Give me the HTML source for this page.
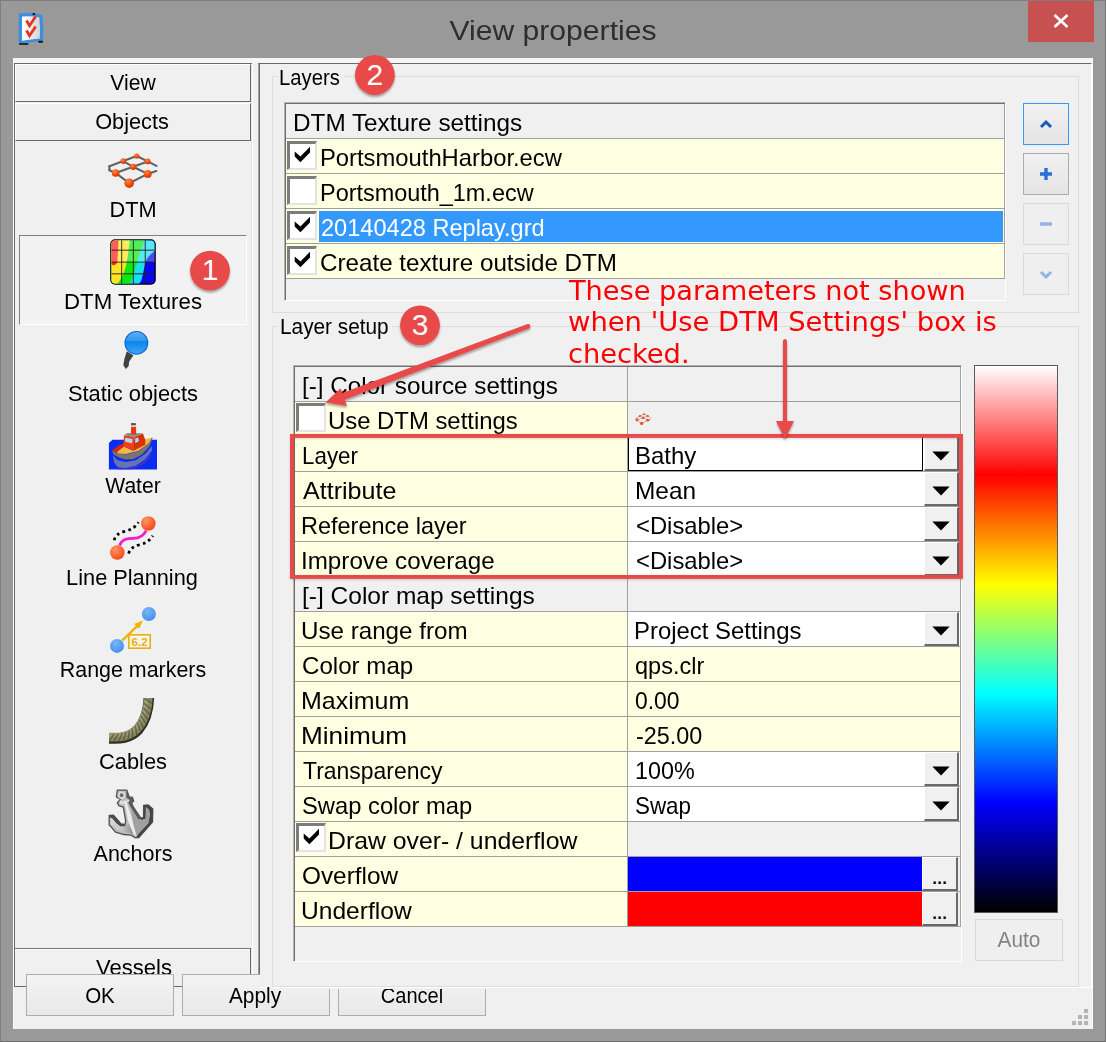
<!DOCTYPE html>
<html><head><meta charset="utf-8"><title>View properties</title>
<style>
html,body{margin:0;padding:0}
body{width:1106px;height:1042px;overflow:hidden;background:#999;position:relative;font-family:"Liberation Sans",sans-serif}
div,svg{position:absolute;box-sizing:border-box}
.t{white-space:nowrap}
.btn{background:linear-gradient(#f2f2f2,#ebebeb 50%,#dddddd 50%,#cfcfcf);border:1px solid #707070}
.pbtn{background:linear-gradient(#f3f3f3,#e9e9e9);border:1px solid #acacac}
.raised{background:#f0f0f0;border-top:1px solid #fff;border-left:1px solid #fff;border-right:1px solid #696969;border-bottom:1px solid #696969}
.cb{width:30px;height:29px;background:#fff;border-top:3px solid #7c7c7c;border-left:3px solid #7c7c7c;border-right:2px solid #e3e3e3;border-bottom:2px solid #e3e3e3}
.hl{height:1px;background:#a0a0a0}
.dd{width:35px;height:34px;background:#f0f0f0;border-top:1px solid #fff;border-left:1px solid #fff;border-right:2px solid #696969;border-bottom:2px solid #696969}
</style></head><body>

<div style="left:0;top:0;width:1106px;height:1042px;border:1px solid #7d7d7d;border-bottom-color:#6e6e6e;border-right-color:#747474"></div>
<div style="left:1028px;top:1px;width:66px;height:41px;background:#c75050"></div>
<svg style="left:1053px;top:14px" width="16" height="14" viewBox="0 0 16 14"><path d="M1.5 1 L14.5 13 M14.5 1 L1.5 13" stroke="#fff" stroke-width="2.6" fill="none"/></svg>
<svg style="left:17px;top:11px" width="30" height="36" viewBox="0 0 30 36">
<defs><linearGradient id="gTi" x1="0" y1="0" x2="1" y2="0"><stop offset="0" stop-color="#ffffff"/><stop offset="1" stop-color="#d4d4d4"/></linearGradient></defs>
<path d="M1.8 2.4 Q14 1.4 25 3.8 Q27.2 17 26 30 Q14 31 1.8 33 Z" fill="#3b8fe0"/>
<path d="M5 5.6 Q14 4.6 22.3 6.2 Q23.6 17 22.8 27.6 Q14 28.4 5 29.8 Z" fill="url(#gTi)"/>
<path d="M9.5 9.5 l3 5.2 l6.2 -9.2" stroke="#e23424" stroke-width="2.8" fill="none"/>
<path d="M9.5 19.5 l3 5.2 l6.2 -9.2" stroke="#e23424" stroke-width="2.8" fill="none"/>
<rect x="2.2" y="32.2" width="9.2" height="1.6" fill="#111"/><rect x="21.4" y="29.8" width="4.4" height="1.9" fill="#111"/><rect x="15.6" y="2" width="2.4" height="1.9" fill="#111"/>
</svg>
<div class="t" id="title" style="left:253.25px;width:600px;text-align:center;transform-origin:50% 0;top:15.76px;font:28.4px/28.4px 'Liberation Sans',sans-serif;color:#2e2e2e;transform:scaleX(1.0608);">View properties</div>
<div style="left:13px;top:58px;width:1080px;height:971px;background:#f0f0f0"></div>
<div style="left:13px;top:58px;width:1080px;height:5px;background:#f6f6f6"></div>
<div style="left:13px;top:58px;width:1px;height:971px;background:#fbfbfb"></div>
<div style="left:1092px;top:58px;width:1px;height:971px;background:#fdfdfd"></div>
<div style="left:14px;top:63px;width:238px;height:924px;border-left:1px solid #696969;border-top:1px solid #696969;border-bottom:1px solid #696969"></div>
<div style="left:251px;top:64px;width:1px;height:910px;background:#e3e3e3"></div>
<div style="left:252px;top:63px;width:1px;height:911px;background:#fff"></div>
<div class="raised" style="left:15px;top:64px;width:236px;height:38px"></div>
<div class="raised" style="left:15px;top:103px;width:236px;height:38px"></div>
<div style="left:15px;top:948px;width:236px;height:38px;background:#f0f0f0;border-top:1px solid #747474;border-right:1px solid #696969"></div>
<div style="left:15px;top:949px;width:235px;height:1px;background:#fff"></div>
<div class="t" id="l_view" style="left:-167.0px;width:600px;text-align:center;transform-origin:50% 0;top:72.94px;font:21.33px/21.33px 'Liberation Sans',sans-serif;color:#000;transform:scaleX(0.9916);">View</div>
<div class="t" id="l_objects" style="left:-167.9px;width:600px;text-align:center;transform-origin:50% 0;top:111.94px;font:21.33px/21.33px 'Liberation Sans',sans-serif;color:#000;transform:scaleX(1.0197);">Objects</div>
<div class="t" id="l_vessels" style="left:-166.2px;width:600px;text-align:center;transform-origin:50% 0;top:958.44px;font:21.33px/21.33px 'Liberation Sans',sans-serif;color:#000;transform:scaleX(1.0328);">Vessels</div>
<div style="left:19px;top:235px;width:228px;height:90px;border-top:1px solid #808080;border-left:1px solid #808080;border-right:1px solid #fff;border-bottom:1px solid #fff;background:#f2f2f2"></div>
<div class="t" id="l_dtm" style="left:-167.4px;width:600px;text-align:center;transform-origin:50% 0;top:199.94px;font:21.33px/21.33px 'Liberation Sans',sans-serif;color:#000;transform:scaleX(1.0203);">DTM</div>
<div class="t" id="l_dtmtex" style="left:-167.2px;width:600px;text-align:center;transform-origin:50% 0;top:291.94px;font:21.33px/21.33px 'Liberation Sans',sans-serif;color:#000;transform:scaleX(1.0429);">DTM Textures</div>
<div class="t" id="l_static" style="left:-167.0px;width:600px;text-align:center;transform-origin:50% 0;top:383.94px;font:21.33px/21.33px 'Liberation Sans',sans-serif;color:#000;transform:scaleX(1.0256);">Static objects</div>
<div class="t" id="l_water" style="left:-167.1px;width:600px;text-align:center;transform-origin:50% 0;top:475.94px;font:21.33px/21.33px 'Liberation Sans',sans-serif;color:#000;transform:scaleX(0.9893);">Water</div>
<div class="t" id="l_line" style="left:-167.8px;width:600px;text-align:center;transform-origin:50% 0;top:567.94px;font:21.33px/21.33px 'Liberation Sans',sans-serif;color:#000;transform:scaleX(1.0191);">Line Planning</div>
<div class="t" id="l_range" style="left:-167.3px;width:600px;text-align:center;transform-origin:50% 0;top:659.94px;font:21.33px/21.33px 'Liberation Sans',sans-serif;color:#000;transform:scaleX(1.0042);">Range markers</div>
<div class="t" id="l_cables" style="left:-167.4px;width:600px;text-align:center;transform-origin:50% 0;top:751.94px;font:21.33px/21.33px 'Liberation Sans',sans-serif;color:#000;transform:scaleX(1.0248);">Cables</div>
<div class="t" id="l_anchors" style="left:-167.3px;width:600px;text-align:center;transform-origin:50% 0;top:843.94px;font:21.33px/21.33px 'Liberation Sans',sans-serif;color:#000;transform:scaleX(1.0077);">Anchors</div>
<svg style="left:0;top:0" width="1106" height="1042" viewBox="0 0 1106 1042">
<defs>
<radialGradient id="gO" cx="0.38" cy="0.3" r="0.75"><stop offset="0" stop-color="#ff8a3a"/><stop offset="0.6" stop-color="#f24a10"/><stop offset="1" stop-color="#c83000"/></radialGradient>
<radialGradient id="gO2" cx="0.35" cy="0.3" r="0.8"><stop offset="0" stop-color="#ff9560"/><stop offset="0.7" stop-color="#fa5a28"/><stop offset="1" stop-color="#e84418"/></radialGradient>
<radialGradient id="gB" cx="0.4" cy="0.3" r="0.8"><stop offset="0" stop-color="#78b6f6"/><stop offset="1" stop-color="#3c8cec"/></radialGradient>
<linearGradient id="gPin" x1="0" y1="0" x2="0" y2="1"><stop offset="0" stop-color="#58aef4"/><stop offset="0.4" stop-color="#2f98f0"/><stop offset="0.42" stop-color="#0a84ea"/><stop offset="1" stop-color="#3ca4f4"/></linearGradient>
<linearGradient id="gAn" x1="0" y1="0" x2="1" y2="0"><stop offset="0" stop-color="#d8d8d8"/><stop offset="0.5" stop-color="#c4c4c4"/><stop offset="1" stop-color="#8c8c8c"/></linearGradient>
<clipPath id="cTex"><rect x="111.5" y="240.5" width="43" height="43" rx="3.5"/></clipPath>
</defs>
<polyline points="109.4,166.3 123.3,161.1 136.7,156.0" fill="none" stroke="#626262" stroke-width="2.1" stroke-linecap="round"/>
<polyline points="136.7,156.0 147.7,161.4 156.4,165.9" fill="none" stroke="#626262" stroke-width="2.1" stroke-linecap="round"/>
<polyline points="123.3,161.1 133.1,166.8 147.7,173.9" fill="none" stroke="#626262" stroke-width="2.1" stroke-linecap="round"/>
<polyline points="147.7,161.4 133.1,166.8 115.6,173.0" fill="none" stroke="#626262" stroke-width="2.1" stroke-linecap="round"/>
<polyline points="109.4,170.2 115.6,173.0 129.2,183.2" fill="none" stroke="#626262" stroke-width="2.1" stroke-linecap="round"/>
<polyline points="129.2,183.2 147.7,173.9 156.4,171.0" fill="none" stroke="#626262" stroke-width="2.1" stroke-linecap="round"/>
<polyline points="109.4,166.3 109.4,170.2" fill="none" stroke="#626262" stroke-width="2.1" stroke-linecap="round"/>
<circle cx="136.7" cy="156.0" r="2.6" fill="url(#gO)"/>
<circle cx="123.3" cy="161.1" r="2.8" fill="url(#gO)"/>
<circle cx="147.7" cy="161.4" r="2.8" fill="url(#gO)"/>
<circle cx="133.1" cy="166.8" r="3.1" fill="url(#gO)"/>
<circle cx="115.6" cy="173.0" r="3.8" fill="url(#gO)"/>
<circle cx="147.7" cy="173.9" r="3.9" fill="url(#gO)"/>
<circle cx="129.2" cy="183.2" r="4.8" fill="url(#gO)"/>
<rect x="110.2" y="239.2" width="45.6" height="45.6" rx="5" fill="#000"/>
<g clip-path="url(#cTex)">
<rect x="111" y="240" width="44" height="44" fill="#0808f0"/>
<path d="M111 240 H155 V251 Q148 255 145.5 262 Q143.5 272 141.5 280 L138.5 285 H111 Z" fill="#18e0f0"/>
<path d="M111 240 H144.7 Q139 255 137 262 Q134 274 129.8 285 H111 Z" fill="#10e810"/>
<path d="M111 240 H129.8 Q128 255 126.8 262 Q125 270 123.3 274 Q120 281 116.5 285 H111 Z" fill="#ffe420"/>
<path d="M111 240 H118.5 Q118 252 117.3 262 Q116 266 113 265 L111 264.5 Z" fill="#ff2018"/>
<rect x="111" y="240" width="44" height="22" fill="#fff" opacity="0.28"/>
<rect x="121.0" y="240" width="1.2" height="44" fill="#202020" opacity="0.75"/>
<rect x="132.8" y="240" width="1.2" height="44" fill="#202020" opacity="0.75"/>
<rect x="144.70000000000002" y="240" width="1.2" height="44" fill="#202020" opacity="0.75"/>
<rect x="111" y="249.6" width="44" height="1.2" fill="#202020" opacity="0.75"/>
<rect x="111" y="261.5" width="44" height="1.2" fill="#202020" opacity="0.75"/>
<rect x="111" y="273.2" width="44" height="1.2" fill="#202020" opacity="0.75"/>
</g>
<polygon points="126.8,351.3 133.4,355.4 129.2,361.4 128.6,366.2 125.7,368.9 123.3,365.0 124.5,358.4" fill="#424242" />
<circle cx="136.4" cy="342.9" r="11.9" fill="#0a60d4"/><circle cx="136.4" cy="342.9" r="10.8" fill="url(#gPin)"/>
<polygon points="108.9,443.0 112.5,439.8 157.0,439.8 157.0,469.6 108.9,469.6" fill="#0a2cf2" />
<polygon points="112.8,455.6 117.9,460.3 125.7,462.1 135.8,460.3 145.3,453.8 151.9,446.0 151.9,450.8 145.3,459.2 135.8,465.7 125.7,468.1 117.9,467.2 114.3,462.7" fill="#6474b4" />
<polygon points="117.9,467.5 125.7,468.4 135.8,466.0 145.3,459.5 151.3,451.4 150.1,458.0 141.8,465.7 131.0,469.6 117.9,469.6" fill="#5030c0" opacity="0.7"/>
<polygon points="112.2,450.8 113.4,454.4 119.7,457.7 125.7,459.5 133.4,458.9 141.8,454.7 149.5,446.3 152.8,437.7 151.0,438.0 148.9,443.6 138.2,451.4 125.7,454.4 117.3,453.5 113.1,450.2" fill="#7c766a" />
<polygon points="112.2,450.5 117.9,446.0 123.3,443.3 123.9,446.6 116.7,452.3 114.0,451.7" fill="#d82808" />
<polygon points="116.7,452.3 123.9,446.6 133.4,450.8 145.3,438.9 151.3,438.0 148.9,443.3 138.2,451.1 125.7,454.1 117.9,453.5" fill="#f8b83c" />
<polygon points="123.9,435.3 134.6,436.8 134.0,450.5 123.3,446.6" fill="#f04014" />
<polygon points="134.6,436.8 143.0,433.5 145.3,440.1 145.3,444.8 134.0,450.5" fill="#d83208" />
<polygon points="123.9,435.3 127.4,432.9 143.0,433.2 135.2,437.0" fill="#8c8c8c" />
<polygon points="125.1,437.7 132.5,438.9 132.2,443.3 125.1,441.8" fill="#a8dcf8" />
<polygon points="135.2,438.4 138.2,437.4 138.8,441.3 135.2,443.2" fill="#a8dcf8" />
<polygon points="131.0,426.3 136.1,426.3 136.1,434.4 131.0,434.1" fill="#e83a10" />
<polygon points="131.0,423.1 135.8,423.1 135.8,425.6 131.0,425.6" fill="#505050" />
<polygon points="131.0,425.6 136.0,425.6 136.0,426.7 131.0,426.7" fill="#f4f4f4" />
<path d="M119.7 545.6 C121.5 539.0 127.4 538.4 133.4 538.4 S144.2 534.8 146.2 530.7" fill="none" stroke="#f21cd2" stroke-width="2.8"/>
<path d="M114.2 540.2 Q115.8 533.7 123.9 531.6 Q134.0 529.5 138.5 522.3" fill="none" stroke="#000" stroke-width="2.7" stroke-dasharray="2.7 3.3"/>
<path d="M128.6 553.6 Q131.0 546.8 138.8 545.0 Q148.3 543.2 152.8 535.7" fill="none" stroke="#000" stroke-width="2.7" stroke-dasharray="2.7 3.3"/>
<circle cx="148.3" cy="523.5" r="7.3" fill="url(#gO2)"/><circle cx="117.3" cy="552.5" r="7.3" fill="url(#gO2)"/>
<path d="M122.1 640.6 L138.2 625.1" stroke="#f0b400" stroke-width="2.3"/>
<polygon points="142.9,620.4 134.1,623.9 139.2,628.8" fill="#f0b400"/>
<circle cx="148.9" cy="614" r="7" fill="url(#gB)"/><circle cx="117" cy="645.9" r="7" fill="url(#gB)"/>
<rect x="128.8" y="634.8" width="21.4" height="13.4" fill="#f6f4ee" stroke="#e8b010" stroke-width="1.6"/>
<text x="139.6" y="646" font-family="Liberation Sans,sans-serif" font-weight="bold" font-size="11.5" fill="#e8b010" text-anchor="middle">6.2</text>
<clipPath id="cCab"><rect x="109" y="698" width="50" height="50"/></clipPath><g clip-path="url(#cCab)">
<path d="M148.9 697 C148.5 712 144.6 722.2 138.3 729.6 C130 738.4 120 739.2 108 738.3" fill="none" stroke="#2e2e20" stroke-width="10.6"/>
<path d="M148.3 697 C147.8 711.5 143.8 721.5 137.5 728.6 C129.6 737 119.8 737.8 108 737" fill="none" stroke="#87875f" stroke-width="8.8"/>
<path d="M146.6 697 C146 711 142.4 720.2 136.4 727 C129 734.8 119.6 735.6 108 734.8" fill="none" stroke="#9c9c74" stroke-width="3.6"/>
<path d="M152.5 703.8 L144.4 698.1" stroke="#4a4a34" stroke-width="1.3" opacity="0.7"/>
<path d="M151.6 709.7 L144.1 703.3" stroke="#4a4a34" stroke-width="1.3" opacity="0.7"/>
<path d="M150.3 715.1 L143.4 708.0" stroke="#4a4a34" stroke-width="1.3" opacity="0.7"/>
<path d="M148.5 720.0 L142.4 712.3" stroke="#4a4a34" stroke-width="1.3" opacity="0.7"/>
<path d="M146.4 724.5 L141.1 716.2" stroke="#4a4a34" stroke-width="1.3" opacity="0.7"/>
<path d="M143.8 728.6 L139.4 719.7" stroke="#4a4a34" stroke-width="1.3" opacity="0.7"/>
<path d="M140.9 732.3 L137.5 723.0" stroke="#4a4a34" stroke-width="1.3" opacity="0.7"/>
<path d="M137.0 735.8 L135.3 726.1" stroke="#4a4a34" stroke-width="1.3" opacity="0.7"/>
<path d="M132.5 738.6 L132.4 728.8" stroke="#4a4a34" stroke-width="1.3" opacity="0.7"/>
<path d="M127.8 740.6 L129.4 730.8" stroke="#4a4a34" stroke-width="1.3" opacity="0.7"/>
<path d="M123.0 741.7 L126.1 732.3" stroke="#4a4a34" stroke-width="1.3" opacity="0.7"/>
<path d="M118.2 742.1 L122.4 733.2" stroke="#4a4a34" stroke-width="1.3" opacity="0.7"/>
<path d="M113.4 742.2 L118.4 733.7" stroke="#4a4a34" stroke-width="1.3" opacity="0.7"/>
<path d="M108.5 741.9 L114.1 733.8" stroke="#4a4a34" stroke-width="1.3" opacity="0.7"/>
</g>
<polygon points="117.3,790.1 126.8,790.1 129.2,796.9 132.5,797.5 133.7,801.1 131.6,802.9 133.4,807.1 140.6,817.8 143.6,817.8 143.6,805.3 148.3,805.0 152.8,809.1 152.5,822.0 138.8,837.5 135.2,837.8 131.0,835.1 123.9,834.5 115.5,832.1 111.9,827.9 109.2,825.0 109.2,815.4 113.4,815.1 117.9,820.2 120.9,823.8 125.1,824.4 125.7,820.8 123.3,807.1 119.1,805.9 117.3,802.9 120.3,799.3 116.4,796.9" fill="#bcbcbc" stroke="#505050" stroke-width="1.3" stroke-linejoin="round"/>
<polygon points="143.6,805.3 148.3,805.0 152.8,809.1 152.5,822.0 138.8,837.5 136.4,837.2 138.2,833.9 148.3,823.2 149.8,815.4 149.2,810.0 145.9,807.1 145.8,818.7 141.2,820.2 139.4,817.8 143.6,817.8" fill="#454545" />
<polygon points="127.1,790.9 129.2,796.9 132.5,797.5 133.7,801.1 131.6,802.9 133.4,807.1 140.6,817.8 138.8,820.2 131.0,807.7 128.0,802.3 129.8,799.9 126.3,797.5 126.3,792.1" fill="#5a5a5a" />
<polygon points="109.2,815.4 113.4,815.1 117.9,820.2 120.9,823.8 125.1,824.4 125.4,826.2 120.3,826.5 116.1,823.2 112.2,818.4 110.4,817.8" fill="#4a4a4a" />
<polygon points="110.4,817.8 112.2,818.5 116.7,823.8 120.6,826.6 126.3,826.6 128.3,823.8 133.7,833.9 128.6,833.0 117.9,830.0 113.1,825.9 110.6,823.8" fill="url(#gAn)" />
<polygon points="131.0,808.3 138.8,820.5 145.6,819.0 145.9,807.7 149.0,810.3 149.6,815.4 148.0,822.9 138.2,833.6 136.4,835.7 133.4,825.0" fill="#a0a0a0" />
<polygon points="123.6,799.9 126.3,801.4 131.0,815.4 136.4,836.0 133.7,833.9 128.0,820.8 125.4,807.1" fill="#ececec" />
<polygon points="119.7,800.5 123.9,801.7 128.6,799.9 129.8,801.1 125.1,803.6 120.3,804.2" fill="#e0e0e0" />
<circle cx="121.6" cy="795.2" r="3.7" fill="#dcdcdc"/><circle cx="121.6" cy="795.2" r="1.9" fill="#6c6c6c"/>
</svg>
<div style="left:258px;top:63px;width:834px;height:925px;border-left:1px solid #a0a0a0;border-top:1px solid #696969;border-right:1px solid #fff;border-bottom:1px solid #fff"></div>
<div style="left:259px;top:63px;width:1px;height:911px;background:#696969"></div>
<div class="pbtn" style="left:26px;top:974px;width:148px;height:42px"></div>
<div class="pbtn" style="left:182px;top:974px;width:148px;height:42px"></div>
<div class="pbtn" style="left:338px;top:974px;width:148px;height:42px"></div>
<div class="t" id="b_cancel" style="left:111.89999999999998px;width:600px;text-align:center;transform-origin:50% 0;top:985.84px;font:21.33px/21.33px 'Liberation Sans',sans-serif;color:#000;transform:scaleX(0.9408);">Cancel</div>
<div style="left:260px;top:64px;width:831px;height:925px;background:#f0f0f0"></div>
<div style="left:260px;top:987px;width:832px;height:1px;background:#fff"></div>
<div class="t" id="b_ok" style="left:-200.2px;width:600px;text-align:center;transform-origin:50% 0;top:985.84px;font:21.33px/21.33px 'Liberation Sans',sans-serif;color:#000;transform:scaleX(0.9625);">OK</div>
<div class="t" id="b_apply" style="left:-44.599999999999994px;width:600px;text-align:center;transform-origin:50% 0;top:985.84px;font:21.33px/21.33px 'Liberation Sans',sans-serif;color:#000;transform:scaleX(0.9786);">Apply</div>
<div style="left:272px;top:76px;width:807px;height:237px;border:1px solid #dcdcdc"></div>
<div style="left:272px;top:326px;width:807px;height:661px;border:1px solid #dcdcdc"></div>
<div style="left:278px;top:66px;width:66px;height:22px;background:#f0f0f0"></div>
<div style="left:278px;top:316px;width:114px;height:22px;background:#f0f0f0"></div>
<div class="t" id="g_layers" style="left:279.40000000000003px;transform-origin:0 0;top:66.88px;font:22px/22px 'Liberation Sans',sans-serif;color:#000;transform:scaleX(0.9205);">Layers</div>
<div class="t" id="g_setup" style="left:280.3px;transform-origin:0 0;top:316.28px;font:22px/22px 'Liberation Sans',sans-serif;color:#000;transform:scaleX(0.9454);">Layer setup</div>
<div style="left:284px;top:102px;width:722px;height:199px;border-left:1px solid #b4b4b4;border-top:1px solid #b4b4b4;border-right:1px solid #fff;border-bottom:1px solid #fff;background:#f0f0f0"></div>
<div style="left:285px;top:103px;width:720px;height:197px;border-left:1px solid #6e6e6e;border-top:1px solid #6e6e6e"></div>
<div class="hl" style="left:286px;top:138px;width:719px"></div>
<div class="t" id="li0" style="left:292.9px;transform-origin:0 0;top:110.68px;font:24px/24px 'Liberation Sans',sans-serif;color:#000;transform:scaleX(1.0125);">DTM Texture settings</div>
<div style="left:286px;top:139px;width:718px;height:34px;background:#ffffe1"></div>
<div class="hl" style="left:286px;top:173px;width:719px"></div>
<div class="cb" style="left:287px;top:141px"></div>
<svg style="left:290px;top:144px" width="25" height="24" viewBox="0 0 25 24"><path d="M4.7 7.6 L10.4 12.6 L20 2.8 L20 8.6 L10.4 18.2 L4.7 12.6 Z" fill="#000"/></svg>
<div class="t" id="li1" style="left:319.7px;transform-origin:0 0;top:145.68px;font:24px/24px 'Liberation Sans',sans-serif;color:#000;transform:scaleX(0.9910);">PortsmouthHarbor.ecw</div>
<div style="left:286px;top:174px;width:718px;height:34px;background:#ffffe1"></div>
<div class="hl" style="left:286px;top:208px;width:719px"></div>
<div class="cb" style="left:287px;top:176px"></div>
<div class="t" id="li2" style="left:319.7px;transform-origin:0 0;top:180.68px;font:24px/24px 'Liberation Sans',sans-serif;color:#000;transform:scaleX(0.9762);">Portsmouth_1m.ecw</div>
<div style="left:286px;top:209px;width:718px;height:34px;background:#ffffe1"></div>
<div class="hl" style="left:286px;top:243px;width:719px"></div>
<div style="left:319px;top:211px;width:684px;height:31px;background:#3399ff"></div>
<div class="cb" style="left:287px;top:211px"></div>
<svg style="left:290px;top:214px" width="25" height="24" viewBox="0 0 25 24"><path d="M4.7 7.6 L10.4 12.6 L20 2.8 L20 8.6 L10.4 18.2 L4.7 12.6 Z" fill="#000"/></svg>
<div class="t" id="li3" style="left:321.40000000000003px;transform-origin:0 0;top:215.68px;font:24px/24px 'Liberation Sans',sans-serif;color:#fff;transform:scaleX(0.9819);">20140428 Replay.grd</div>
<div style="left:286px;top:244px;width:718px;height:34px;background:#ffffe1"></div>
<div class="hl" style="left:286px;top:278px;width:719px"></div>
<div class="cb" style="left:287px;top:246px"></div>
<svg style="left:290px;top:249px" width="25" height="24" viewBox="0 0 25 24"><path d="M4.7 7.6 L10.4 12.6 L20 2.8 L20 8.6 L10.4 18.2 L4.7 12.6 Z" fill="#000"/></svg>
<div class="t" id="li4" style="left:319.59999999999997px;transform-origin:0 0;top:250.68px;font:24px/24px 'Liberation Sans',sans-serif;color:#000;transform:scaleX(1.0075);">Create texture outside DTM</div>
<div style="left:1004px;top:104px;width:1px;height:175px;background:#a0a0a0"></div>
<div style="left:1023px;top:103px;width:46px;height:42px;border:1px solid #3399ff;background:linear-gradient(#f1f1f1,#e4e4e4)"></div>
<svg style="left:1039px;top:119px" width="14" height="10" viewBox="0 0 14 10"><path d="M2 8 L7 3 L12 8" stroke="#1b58bc" stroke-width="3" fill="none"/></svg>
<div style="left:1023px;top:153px;width:46px;height:42px;border:1px solid #acacac;background:linear-gradient(#f1f1f1,#e4e4e4)"></div>
<svg style="left:1039px;top:167px" width="14" height="14" viewBox="0 0 14 14"><path d="M7 1 V13 M1 7 H13" stroke="#2a6fd6" stroke-width="3.4" fill="none"/></svg>
<div style="left:1023px;top:203px;width:46px;height:42px;border:1px solid #d9d9d9;background:#efefef"></div>
<svg style="left:1039px;top:221px" width="14" height="6" viewBox="0 0 14 6"><path d="M1 3 H13" stroke="#8fb4e8" stroke-width="3.4" fill="none"/></svg>
<div style="left:1023px;top:253px;width:46px;height:42px;border:1px solid #d9d9d9;background:#efefef"></div>
<svg style="left:1039px;top:270px" width="14" height="10" viewBox="0 0 14 10"><path d="M2 2 L7 7 L12 2" stroke="#8fb4e8" stroke-width="3" fill="none"/></svg>
<div style="left:293px;top:365px;width:669px;height:597px;border-left:1px solid #b4b4b4;border-top:1px solid #b4b4b4;border-right:1px solid #fff;border-bottom:1px solid #fff;background:#f0f0f0"></div>
<div style="left:294px;top:366px;width:667px;height:595px;border-left:1px solid #6e6e6e;border-top:1px solid #6e6e6e"></div>
<div style="left:295px;top:367px;width:332px;height:34px;background:#f0f0f0"></div>
<div style="left:628px;top:367px;width:332px;height:34px;background:#f0f0f0"></div>
<div class="hl" style="left:295px;top:401px;width:666px"></div>
<div class="t" id="p0" style="left:301.8px;transform-origin:0 0;top:374.38px;font:24px/24px 'Liberation Sans',sans-serif;color:#000;transform:scaleX(1.0092);">[-] Color source settings</div>
<div style="left:295px;top:402px;width:332px;height:34px;background:#ffffe1"></div>
<div style="left:628px;top:402px;width:332px;height:34px;background:#f0f0f0"></div>
<div class="hl" style="left:295px;top:436px;width:666px"></div>
<div class="cb" style="left:296px;top:403px"></div>
<div class="t" id="p1" style="left:327.8px;transform-origin:0 0;top:408.88px;font:24px/24px 'Liberation Sans',sans-serif;color:#000;transform:scaleX(0.9947);">Use DTM settings</div>
<div style="left:295px;top:437px;width:332px;height:34px;background:#ffffe1"></div>
<div style="left:628px;top:437px;width:332px;height:34px;background:#fff"></div>
<div class="hl" style="left:295px;top:471px;width:666px"></div>
<div class="t" id="p2" style="left:301.59999999999997px;transform-origin:0 0;top:443.88px;font:24px/24px 'Liberation Sans',sans-serif;color:#000;transform:scaleX(0.9330);">Layer</div>
<div class="t" id="p2v" style="left:634.6px;transform-origin:0 0;top:443.88px;font:24px/24px 'Liberation Sans',sans-serif;color:#000;transform:scaleX(0.9985);">Bathy</div>
<div class="dd" style="left:924px;top:437px"></div>
<svg style="left:931.5px;top:450.5px" width="18" height="10" viewBox="0 0 18 10"><path d="M0.3 0.4 H17.7 L9 9.6 Z" fill="#000"/></svg>
<div style="left:295px;top:472px;width:332px;height:34px;background:#ffffe1"></div>
<div style="left:628px;top:472px;width:332px;height:34px;background:#fff"></div>
<div class="hl" style="left:295px;top:506px;width:666px"></div>
<div class="t" id="p3" style="left:302.59999999999997px;transform-origin:0 0;top:478.88px;font:24px/24px 'Liberation Sans',sans-serif;color:#000;transform:scaleX(1.0444);">Attribute</div>
<div class="t" id="p3v" style="left:634.6px;transform-origin:0 0;top:478.88px;font:24px/24px 'Liberation Sans',sans-serif;color:#000;transform:scaleX(1.0175);">Mean</div>
<div class="dd" style="left:924px;top:472px"></div>
<svg style="left:931.5px;top:485.5px" width="18" height="10" viewBox="0 0 18 10"><path d="M0.3 0.4 H17.7 L9 9.6 Z" fill="#000"/></svg>
<div style="left:295px;top:507px;width:332px;height:34px;background:#ffffe1"></div>
<div style="left:628px;top:507px;width:332px;height:34px;background:#fff"></div>
<div class="hl" style="left:295px;top:541px;width:666px"></div>
<div class="t" id="p4" style="left:300.59999999999997px;transform-origin:0 0;top:513.88px;font:24px/24px 'Liberation Sans',sans-serif;color:#000;transform:scaleX(0.9778);">Reference layer</div>
<div class="t" id="p4v" style="left:636.0px;transform-origin:0 0;top:513.88px;font:24px/24px 'Liberation Sans',sans-serif;color:#000;transform:scaleX(0.9924);">&lt;Disable&gt;</div>
<div class="dd" style="left:924px;top:507px"></div>
<svg style="left:931.5px;top:520.5px" width="18" height="10" viewBox="0 0 18 10"><path d="M0.3 0.4 H17.7 L9 9.6 Z" fill="#000"/></svg>
<div style="left:295px;top:542px;width:332px;height:34px;background:#ffffe1"></div>
<div style="left:628px;top:542px;width:332px;height:34px;background:#fff"></div>
<div class="hl" style="left:295px;top:576px;width:666px"></div>
<div class="t" id="p5" style="left:300.59999999999997px;transform-origin:0 0;top:548.88px;font:24px/24px 'Liberation Sans',sans-serif;color:#000;transform:scaleX(1.0079);">Improve coverage</div>
<div class="t" id="p5v" style="left:636.0px;transform-origin:0 0;top:548.88px;font:24px/24px 'Liberation Sans',sans-serif;color:#000;transform:scaleX(0.9924);">&lt;Disable&gt;</div>
<div class="dd" style="left:924px;top:542px"></div>
<svg style="left:931.5px;top:555.5px" width="18" height="10" viewBox="0 0 18 10"><path d="M0.3 0.4 H17.7 L9 9.6 Z" fill="#000"/></svg>
<div style="left:295px;top:577px;width:332px;height:34px;background:#f0f0f0"></div>
<div style="left:628px;top:577px;width:332px;height:34px;background:#f0f0f0"></div>
<div class="hl" style="left:295px;top:611px;width:666px"></div>
<div class="t" id="p6" style="left:301.8px;transform-origin:0 0;top:583.88px;font:24px/24px 'Liberation Sans',sans-serif;color:#000;transform:scaleX(1.0205);">[-] Color map settings</div>
<div style="left:295px;top:612px;width:332px;height:34px;background:#ffffe1"></div>
<div style="left:628px;top:612px;width:332px;height:34px;background:#fff"></div>
<div class="hl" style="left:295px;top:646px;width:666px"></div>
<div class="t" id="p7" style="left:300.59999999999997px;transform-origin:0 0;top:618.88px;font:24px/24px 'Liberation Sans',sans-serif;color:#000;transform:scaleX(1.0070);">Use range from</div>
<div class="t" id="p7v" style="left:633.9px;transform-origin:0 0;top:618.88px;font:24px/24px 'Liberation Sans',sans-serif;color:#000;transform:scaleX(0.9958);">Project Settings</div>
<div class="dd" style="left:924px;top:612px"></div>
<svg style="left:931.5px;top:625.5px" width="18" height="10" viewBox="0 0 18 10"><path d="M0.3 0.4 H17.7 L9 9.6 Z" fill="#000"/></svg>
<div style="left:295px;top:647px;width:332px;height:34px;background:#ffffe1"></div>
<div style="left:628px;top:647px;width:332px;height:34px;background:#ffffe1"></div>
<div class="hl" style="left:295px;top:681px;width:666px"></div>
<div class="t" id="p8" style="left:301.59999999999997px;transform-origin:0 0;top:653.88px;font:24px/24px 'Liberation Sans',sans-serif;color:#000;transform:scaleX(1.0046);">Color map</div>
<div class="t" id="p8v" style="left:634.9px;transform-origin:0 0;top:653.88px;font:24px/24px 'Liberation Sans',sans-serif;color:#000;transform:scaleX(0.9790);">qps.clr</div>
<div style="left:295px;top:682px;width:332px;height:34px;background:#ffffe1"></div>
<div style="left:628px;top:682px;width:332px;height:34px;background:#ffffe1"></div>
<div class="hl" style="left:295px;top:716px;width:666px"></div>
<div class="t" id="p9" style="left:300.59999999999997px;transform-origin:0 0;top:688.88px;font:24px/24px 'Liberation Sans',sans-serif;color:#000;transform:scaleX(1.0401);">Maximum</div>
<div class="t" id="p9v" style="left:634.9px;transform-origin:0 0;top:688.88px;font:24px/24px 'Liberation Sans',sans-serif;color:#000;transform:scaleX(0.9537);">0.00</div>
<div style="left:295px;top:717px;width:332px;height:34px;background:#ffffe1"></div>
<div style="left:628px;top:717px;width:332px;height:34px;background:#ffffe1"></div>
<div class="hl" style="left:295px;top:751px;width:666px"></div>
<div class="t" id="p10" style="left:300.59999999999997px;transform-origin:0 0;top:723.88px;font:24px/24px 'Liberation Sans',sans-serif;color:#000;transform:scaleX(1.0904);">Minimum</div>
<div class="t" id="p10v" style="left:635.5px;transform-origin:0 0;top:723.88px;font:24px/24px 'Liberation Sans',sans-serif;color:#000;transform:scaleX(0.9743);">-25.00</div>
<div style="left:295px;top:752px;width:332px;height:34px;background:#ffffe1"></div>
<div style="left:628px;top:752px;width:332px;height:34px;background:#fff"></div>
<div class="hl" style="left:295px;top:786px;width:666px"></div>
<div class="t" id="p11" style="left:302.59999999999997px;transform-origin:0 0;top:758.88px;font:24px/24px 'Liberation Sans',sans-serif;color:#000;transform:scaleX(0.9560);">Transparency</div>
<div class="t" id="p11v" style="left:634.5px;transform-origin:0 0;top:758.88px;font:24px/24px 'Liberation Sans',sans-serif;color:#000;transform:scaleX(0.9729);">100%</div>
<div class="dd" style="left:924px;top:752px"></div>
<svg style="left:931.5px;top:765.5px" width="18" height="10" viewBox="0 0 18 10"><path d="M0.3 0.4 H17.7 L9 9.6 Z" fill="#000"/></svg>
<div style="left:295px;top:787px;width:332px;height:34px;background:#ffffe1"></div>
<div style="left:628px;top:787px;width:332px;height:34px;background:#fff"></div>
<div class="hl" style="left:295px;top:821px;width:666px"></div>
<div class="t" id="p12" style="left:301.59999999999997px;transform-origin:0 0;top:793.88px;font:24px/24px 'Liberation Sans',sans-serif;color:#000;transform:scaleX(0.9895);">Swap color map</div>
<div class="t" id="p12v" style="left:634.9px;transform-origin:0 0;top:793.88px;font:24px/24px 'Liberation Sans',sans-serif;color:#000;transform:scaleX(0.9330);">Swap</div>
<div class="dd" style="left:924px;top:787px"></div>
<svg style="left:931.5px;top:800.5px" width="18" height="10" viewBox="0 0 18 10"><path d="M0.3 0.4 H17.7 L9 9.6 Z" fill="#000"/></svg>
<div style="left:295px;top:822px;width:332px;height:34px;background:#ffffe1"></div>
<div style="left:628px;top:822px;width:332px;height:34px;background:#f0f0f0"></div>
<div class="hl" style="left:295px;top:856px;width:666px"></div>
<div class="cb" style="left:296px;top:823px"></div>
<svg style="left:299px;top:826px" width="25" height="24" viewBox="0 0 25 24"><path d="M4.7 7.6 L10.4 12.6 L20 2.8 L20 8.6 L10.4 18.2 L4.7 12.6 Z" fill="#000"/></svg>
<div class="t" id="p13" style="left:327.8px;transform-origin:0 0;top:828.88px;font:24px/24px 'Liberation Sans',sans-serif;color:#000;transform:scaleX(1.0327);">Draw over- / underflow</div>
<div style="left:295px;top:857px;width:332px;height:34px;background:#ffffe1"></div>
<div style="left:628px;top:857px;width:332px;height:34px;background:#f0f0f0"></div>
<div style="left:628px;top:857px;width:294px;height:34px;background:#0000ff"></div>
<div class="hl" style="left:295px;top:891px;width:666px"></div>
<div class="t" id="p14" style="left:301.59999999999997px;transform-origin:0 0;top:863.88px;font:24px/24px 'Liberation Sans',sans-serif;color:#000;transform:scaleX(1.0139);">Overflow</div>
<div class="dd" style="left:922px;top:857px;width:36px"></div>
<div class="t" id="p14e" style="left:931.2px;transform-origin:0 0;top:863.98px;font:24px/24px 'Liberation Sans',sans-serif;color:#000;letter-spacing:-1.65px;">...</div>
<div style="left:295px;top:892px;width:332px;height:34px;background:#ffffe1"></div>
<div style="left:628px;top:892px;width:332px;height:34px;background:#f0f0f0"></div>
<div style="left:628px;top:892px;width:294px;height:34px;background:#ff0000"></div>
<div class="hl" style="left:295px;top:926px;width:666px"></div>
<div class="t" id="p15" style="left:300.59999999999997px;transform-origin:0 0;top:898.88px;font:24px/24px 'Liberation Sans',sans-serif;color:#000;transform:scaleX(1.0245);">Underflow</div>
<div class="dd" style="left:922px;top:892px;width:36px"></div>
<div class="t" id="p15e" style="left:931.2px;transform-origin:0 0;top:898.98px;font:24px/24px 'Liberation Sans',sans-serif;color:#000;letter-spacing:-1.65px;">...</div>
<div style="left:627px;top:367px;width:1px;height:560px;background:#a0a0a0"></div>
<div style="left:960px;top:367px;width:1px;height:560px;background:#a0a0a0"></div>
<div style="left:628px;top:437px;width:295px;height:34px;border:1px solid #000;border-top:none"></div>
<svg style="left:633px;top:411px" width="20" height="16" viewBox="633 411 20 16"><path d="M635.5 418.6 L639.9 416 L644.1 414 L647.8 416 L651 417.8 M639.9 416 L643.1 417.8 L647.8 420.2 L650.8 419.4 M647.8 416 L643.1 417.8 L637 420 L641.7 423.6 L647.8 420.2 M635.5 418.6 L637 420" stroke="#9a8a84" stroke-width="0.8" fill="none" opacity="0.8"/><g fill="#f24a12"><circle cx="644.1" cy="414.2" r="0.9"/><circle cx="639.9" cy="416" r="1.1"/><circle cx="647.8" cy="416" r="1.1"/><circle cx="643.1" cy="417.8" r="1.2"/><circle cx="637" cy="420" r="1.4"/><circle cx="647.8" cy="420.2" r="1.4"/><circle cx="641.7" cy="423.4" r="1.6"/></g></svg>
<div style="left:974px;top:365px;width:84px;height:548px;border:1px solid #5a5a5a;background:linear-gradient(#ffffff 0%,#ff0000 20%,#ffff00 40%,#00ffff 60%,#0000ff 80%,#000000 100%)"></div>
<div style="left:975px;top:919px;width:88px;height:42px;border:1px solid #d9d9d9;background:#efefef"></div>
<div class="t" id="auto" style="left:719.25px;width:600px;text-align:center;transform-origin:50% 0;top:928.88px;font:22px/22px 'Liberation Sans',sans-serif;color:#838383;transform:scaleX(0.9453);">Auto</div>
<svg style="left:0;top:0" width="1106" height="1042" viewBox="0 0 1106 1042">
<defs><filter id="sh" x="-20%" y="-20%" width="140%" height="150%"><feGaussianBlur in="SourceAlpha" stdDeviation="1.2"/><feOffset dy="1.5"/><feComponentTransfer><feFuncA type="linear" slope="0.35"/></feComponentTransfer><feMerge><feMergeNode/><feMergeNode in="SourceGraphic"/></feMerge></filter><filter id="sh2" x="-5%" y="-5%" width="110%" height="115%"><feGaussianBlur in="SourceAlpha" stdDeviation="1"/><feOffset dy="1"/><feComponentTransfer><feFuncA type="linear" slope="0.18"/></feComponentTransfer><feMerge><feMergeNode/><feMergeNode in="SourceGraphic"/></feMerge></filter></defs>
<rect x="292" y="435.9" width="669" height="141" fill="none" stroke="#e8484a" stroke-width="3.9" filter="url(#sh2)"/>
<g filter="url(#sh)"><path d="M785 341 V424" stroke="#e8484a" stroke-width="4" stroke-linecap="round"/><polygon points="776,421 794,421 785,439" fill="#e8484a"/></g>
<g filter="url(#sh)"><polygon points="527.2,324.2 529.2,328.2 343.5,400.2 340.8,393.6" fill="#e8484a"/><circle cx="528.2" cy="326.2" r="2.2" fill="#e8484a"/><polygon points="325.5,402.6 340.6,388.2 347,406" fill="#e8484a"/></g>
<circle cx="210" cy="270.6" r="19.9" fill="#e8484a" filter="url(#sh)"/>
<text x="210" y="280.1" font-family="Liberation Sans,sans-serif" font-size="30" fill="#fff" text-anchor="middle">1</text>
<circle cx="374.9" cy="75" r="19.9" fill="#e8484a" filter="url(#sh)"/>
<text x="374.9" y="84.5" font-family="Liberation Sans,sans-serif" font-size="30" fill="#fff" text-anchor="middle">2</text>
<circle cx="420" cy="325.3" r="19.9" fill="#e8484a" filter="url(#sh)"/>
<text x="420" y="334.8" font-family="Liberation Sans,sans-serif" font-size="30" fill="#fff" text-anchor="middle">3</text>
</svg>
<div class="t" id="a1" style="left:569.0px;transform-origin:0 0;top:277.82px;font:26.67px/26.67px 'DejaVu Sans',sans-serif;color:#ff0000;transform:scaleX(1.0191);">These parameters not shown</div>
<div class="t" id="a2" style="left:568.0px;transform-origin:0 0;top:309.42px;font:26.67px/26.67px 'DejaVu Sans',sans-serif;color:#ff0000;transform:scaleX(1.0274);">when 'Use DTM Settings' box is</div>
<div class="t" id="a3" style="left:568.0px;transform-origin:0 0;top:341.02px;font:26.67px/26.67px 'DejaVu Sans',sans-serif;color:#ff0000;transform:scaleX(1.0225);">checked.</div>
<div style="left:1084px;top:1009px;width:4px;height:4px;background:#b4b4b4"></div>
<div style="left:1078px;top:1015px;width:4px;height:4px;background:#b4b4b4"></div>
<div style="left:1084px;top:1015px;width:4px;height:4px;background:#b4b4b4"></div>
<div style="left:1072px;top:1021px;width:4px;height:4px;background:#b4b4b4"></div>
<div style="left:1078px;top:1021px;width:4px;height:4px;background:#b4b4b4"></div>
<div style="left:1084px;top:1021px;width:4px;height:4px;background:#b4b4b4"></div>
</body></html>
